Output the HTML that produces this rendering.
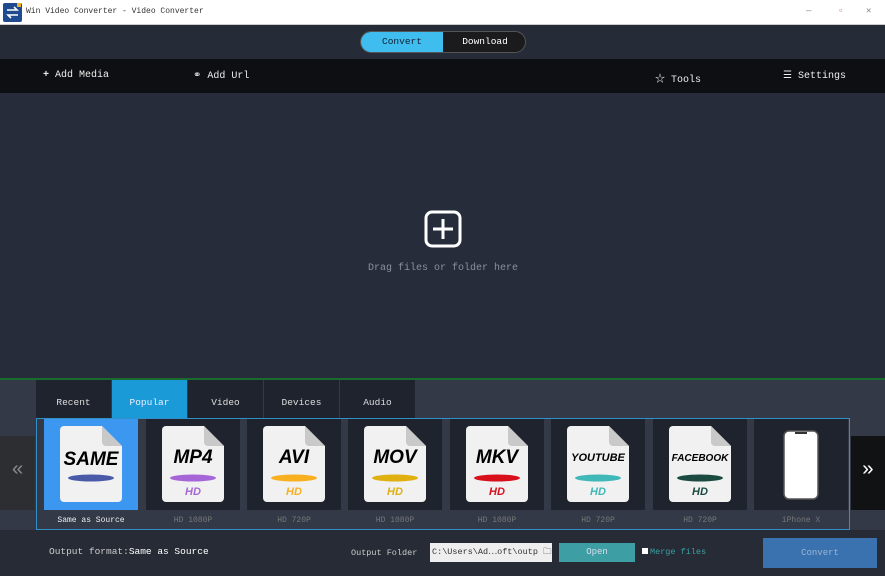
<!DOCTYPE html>
<html><head><meta charset="utf-8"><style>
*{margin:0;padding:0;box-sizing:border-box}
body{width:885px;height:576px;overflow:hidden;background:#272c3a;font-family:"Liberation Mono","Noto Sans CJK SC",monospace;position:relative;color:#ddd}
.a{position:absolute}
.title{left:0;top:0;width:885px;height:25px;background:#fff;border-bottom:1px solid #ccc}
.logo{left:3px;top:3px;width:19px;height:19px;background:#1f4a8f;border-radius:2px}
.tt{left:26px;top:7px;font-size:8px;color:#333;white-space:nowrap}
.wc{top:6px;font-size:9px;color:#888}
.top{left:0;top:25px;width:885px;height:34px;background:#262b38}
.seg{left:360px;top:31px;width:166px;height:22px;border-radius:11px;border:1px solid #555;background:#1b1b1d;overflow:hidden}
.seg div{position:absolute;top:0;height:20px;line-height:20px;font-size:9.5px;text-align:center}
.bar{left:0;top:59px;width:885px;height:34px;background:#0e0f12;font-size:10px;color:#eee}
.bar span{position:absolute;top:11px;white-space:nowrap}
.lower{left:0;top:378px;width:885px;height:152px;background:#333947;border-top:2px solid #1a6b2e}
.tab{top:380px;height:38px;width:75px;background:#1f232e;color:#ddd;font-size:9.5px;text-align:center;line-height:45px}
.box{left:36px;top:418px;width:814px;height:112px;border:1px solid #3290c8}
.item{top:419px;width:94px;height:91px;background:#1f232e}
.lab{top:516px;width:94px;text-align:center;font-size:8px;color:#777}
.bottom{left:0;top:530px;width:885px;height:46px;background:#262b35}
</style></head><body>
<div class="a title"></div>
<div class="a logo"><svg width="19" height="19"><path d="M4 7h10l-3-3M15 12H5l3 3" stroke="#fff" stroke-width="1.6" fill="none"/><rect x="14" y="0" width="4" height="4" fill="#e8b030"/></svg></div>
<div class="a tt">Win Video Converter - Video Converter</div>
<div class="a wc" style="left:806px">—</div><div class="a wc" style="left:838px;color:#d66">▫</div><div class="a wc" style="left:866px">✕</div>
<div class="a top"></div>
<div class="a seg"><div style="left:0;width:82px;background:#3fbdee;color:#123">Convert</div><div style="left:82px;width:84px;color:#fff">Download</div></div>
<div class="a bar"><span style="left:43px"><b>+</b> Add Media</span><span style="left:193px">⚭ Add Url</span><span style="left:655px">☆ Tools</span><span style="left:783px">☰ Settings</span></div>
<svg class="a" style="left:424px;top:210px" width="38" height="38"><rect x="2" y="2" width="34" height="34" rx="6" fill="none" stroke="#fff" stroke-width="3"/><path d="M19 9v20M9 19h20" stroke="#fff" stroke-width="3"/></svg>
<div class="a" style="left:368px;top:263px;font-size:10px;color:#8a909c">Drag files or folder here</div>
<div class="a lower"></div>
<div class="a tab" style="left:36px">Recent</div>
<div class="a tab" style="left:112px;background:#1a9ad6;color:#eef">Popular</div>
<div class="a tab" style="left:188px">Video</div>
<div class="a tab" style="left:264px">Devices</div>
<div class="a tab" style="left:340px">Audio</div>
<div class="a" style="left:0;top:436px;width:35px;height:74px;background:#2d2e32;color:#888;font-size:20px;text-align:center;line-height:70px">«</div>
<div class="a" style="left:851px;top:436px;width:34px;height:74px;background:#111214;color:#fff;font-size:20px;text-align:center;line-height:70px">»</div>
<div class="a box"></div>
<div class="a item" style="left:44px;background:#3b97f0"></div>
<div class="a item" style="left:146px"></div><div class="a item" style="left:247px"></div><div class="a item" style="left:348px"></div><div class="a item" style="left:450px"></div><div class="a item" style="left:551px"></div><div class="a item" style="left:653px"></div><div class="a item" style="left:754px"></div>
<svg class="a" style="left:0;top:0" width="885" height="576">
<defs><g id="f"><path d="M4 0h38l20 20v52a4 4 0 0 1-4 4H4a4 4 0 0 1-4-4V4a4 4 0 0 1 4-4z" fill="#f1f1f1"/><path d="M42 0v16a4 4 0 0 0 4 4h16z" fill="#c9c9c9"/></g></defs>
<g font-family="Liberation Sans,sans-serif" font-weight="bold" font-style="italic" text-anchor="middle">
<g transform="translate(60,426)"><use href="#f"/><text x="31" y="39" font-size="19" fill="#000">SAME</text><ellipse cx="31" cy="52" rx="23" ry="3.5" fill="#4a5aa8"/></g>
<g transform="translate(162,426)"><use href="#f"/><text x="31" y="37" font-size="19" fill="#000">MP4</text><ellipse cx="31" cy="52" rx="23" ry="3.5" fill="#a666d8"/><text x="31" y="69" font-size="11" fill="#a666d8">HD</text></g>
<g transform="translate(263,426)"><use href="#f"/><text x="31" y="37" font-size="19" fill="#000">AVI</text><ellipse cx="31" cy="52" rx="23" ry="3.5" fill="#f8b020"/><text x="31" y="69" font-size="11" fill="#f8b020">HD</text></g>
<g transform="translate(364,426)"><use href="#f"/><text x="31" y="37" font-size="19" fill="#000">MOV</text><ellipse cx="31" cy="52" rx="23" ry="3.5" fill="#e0b010"/><text x="31" y="69" font-size="11" fill="#e0b010">HD</text></g>
<g transform="translate(466,426)"><use href="#f"/><text x="31" y="37" font-size="19" fill="#000">MKV</text><ellipse cx="31" cy="52" rx="23" ry="3.5" fill="#d8101c"/><text x="31" y="69" font-size="11" fill="#d8101c">HD</text></g>
<g transform="translate(567,426)"><use href="#f"/><text x="31" y="35" font-size="11" fill="#000">YOUTUBE</text><ellipse cx="31" cy="52" rx="23" ry="3.5" fill="#40b8b8"/><text x="31" y="69" font-size="11" fill="#40b8b8">HD</text></g>
<g transform="translate(669,426)"><use href="#f"/><text x="31" y="35" font-size="10" fill="#000">FACEBOOK</text><ellipse cx="31" cy="52" rx="23" ry="3.5" fill="#1a4a40"/><text x="31" y="69" font-size="11" fill="#1a4a40">HD</text></g>
</g>
<rect x="784" y="431" width="34" height="68" rx="5" fill="#fff" stroke="#555" stroke-width="1.5"/><rect x="795" y="432" width="12" height="2" fill="#333"/>
</svg>
<div class="a lab" style="left:44px;color:#eee">Same as Source</div>
<div class="a lab" style="left:146px">HD 1080P</div><div class="a lab" style="left:247px">HD 720P</div><div class="a lab" style="left:348px">HD 1080P</div><div class="a lab" style="left:450px">HD 1080P</div><div class="a lab" style="left:551px">HD 720P</div><div class="a lab" style="left:653px">HD 720P</div><div class="a lab" style="left:754px">iPhone X</div>
<div class="a bottom"></div>
<div class="a" style="left:49px;top:546px;font-size:9.5px;color:#ccc">Output format:<span style="color:#fff">Same as Source</span></div>
<div class="a" style="left:351px;top:548px;font-size:8.5px;color:#ccc">Output Folder</div>
<div class="a" style="left:430px;top:543px;width:122px;height:19px;background:#eee;color:#333;font-size:8.5px;line-height:19px;padding-left:2px;white-space:nowrap;overflow:hidden">C:\Users\Ad⋯oft\outp 🗀</div>
<div class="a" style="left:559px;top:543px;width:76px;height:19px;background:#3d9ea4;color:#dde;font-size:9px;text-align:center;line-height:19px">Open</div>
<div class="a" style="left:642px;top:548px;width:6px;height:6px;background:#fff"></div>
<div class="a" style="left:650px;top:547px;font-size:8.5px;color:#3da0a6">Merge files</div>
<div class="a" style="left:763px;top:538px;width:114px;height:30px;background:#3a72b0;color:#9bb4d0;font-size:9px;text-align:center;line-height:30px">Convert</div>
</body></html>
